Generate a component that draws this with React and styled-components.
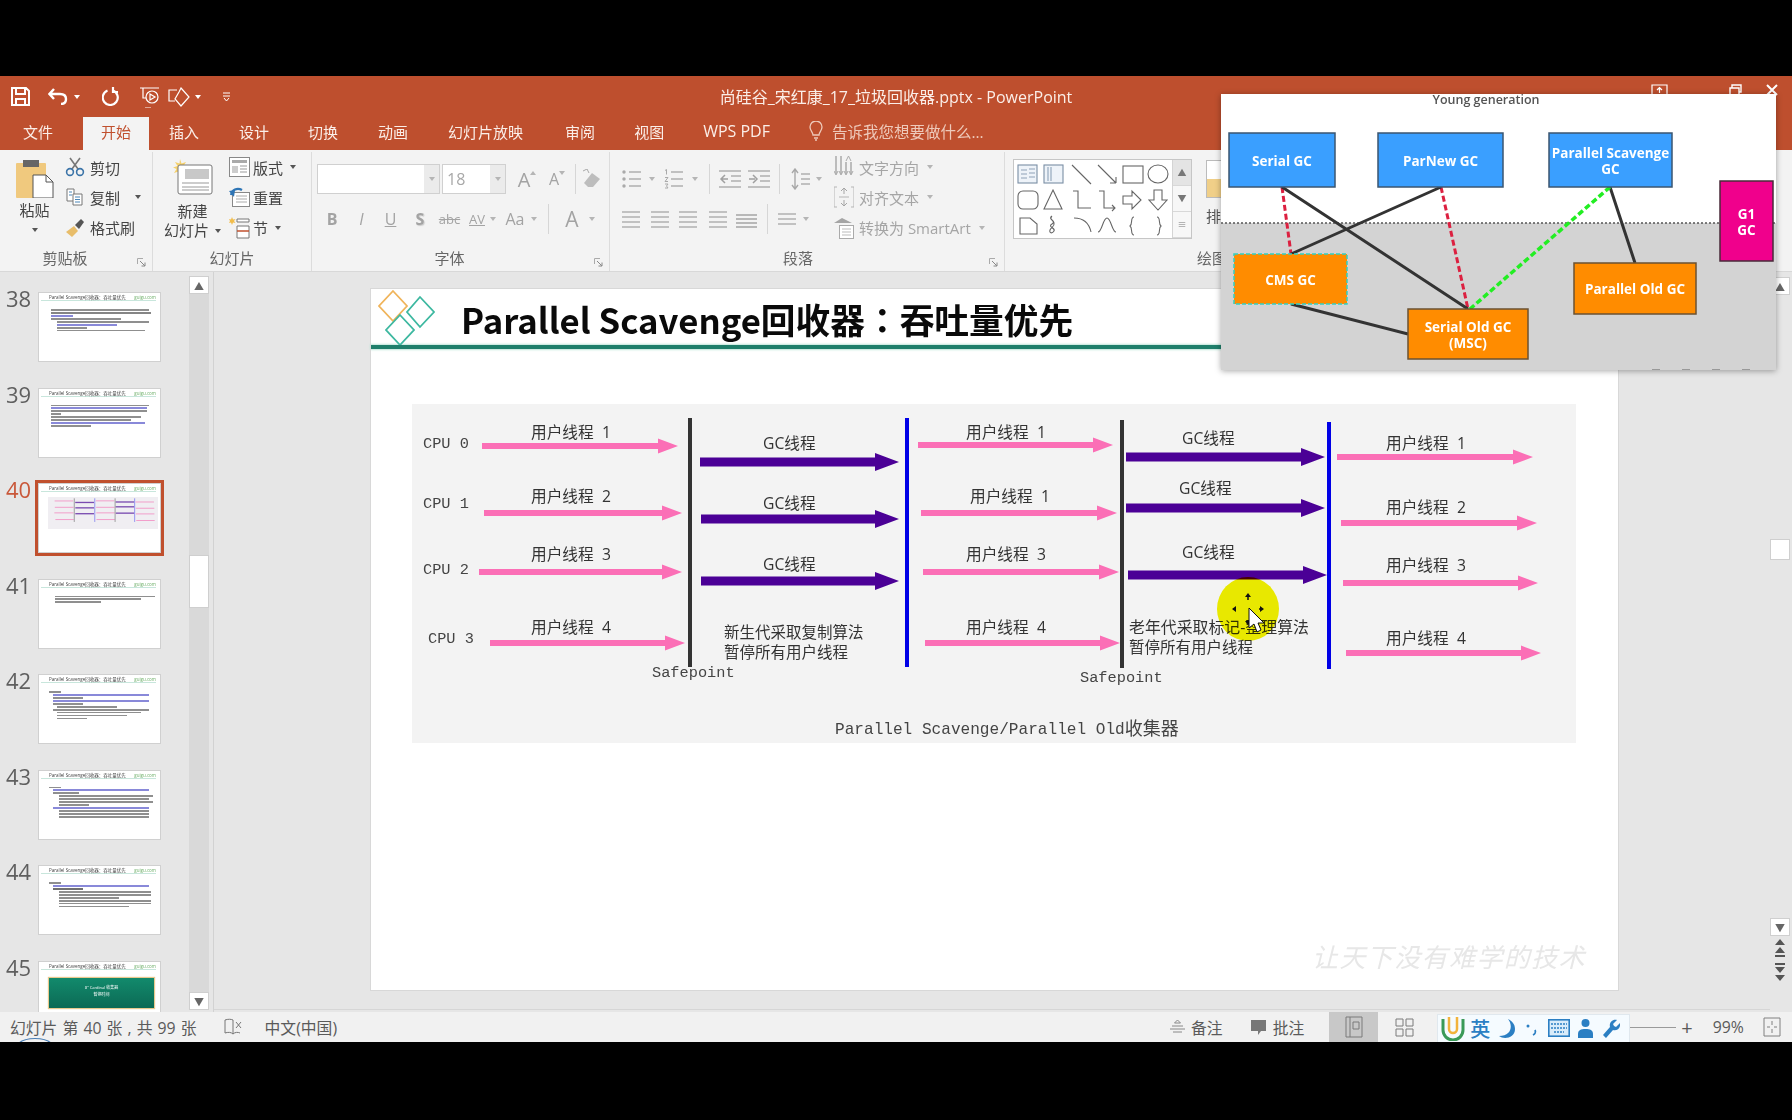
import styled, { createGlobalStyle } from "styled-components";

const CJK = `"Open Sans", "Noto Sans CJK SC", sans-serif`;
const MONO = `"Liberation Mono", "Noto Sans CJK SC", monospace`;

const GlobalStyle = createGlobalStyle`
  html, body { margin: 0; padding: 0; background: #000; }
  body { font-family: ${CJK}; overflow: hidden; }
`;

const Page = styled.div`
  width: 1792px;
  height: 1120px;
  padding-top: 76px;
  box-sizing: border-box;
  background: #000;
  overflow: hidden;
`;

const Window = styled.div`
  position: relative;
  width: 1792px;
  height: 966px;
  display: flex;
  flex-direction: column;
  background: #e6e6e6;
  overflow: hidden;
  filter: blur(0.45px);
`;

/* title bar */
const TitleBar = styled.div`
  height: 41px;
  flex: none;
  display: grid;
  grid-template-columns: 1fr auto 1fr;
  align-items: center;
  background: #be4f2e;
  color: #fff;
`;

const QuickBar = styled.div`
  display: flex;
  align-items: center;
  padding-left: 11px;
`;

const QuickIcon = styled.svg`
  flex: none;
  margin-right: ${(p) => p.$mr || 0}px;
  fill: none;
  stroke: #fff;
  stroke-width: 2;
`;

const QuickCaret = styled.i`
  width: 0;
  height: 0;
  flex: none;
  border-left: 3.5px solid transparent;
  border-right: 3.5px solid transparent;
  border-top: 4px solid #fff;
  margin-right: ${(p) => p.$mr || 0}px;
`;

const DocTitle = styled.div`
  font-size: 16px;
  color: #fbeee8;
  margin-top: -1px;
`;

const WinControls = styled.div`
  display: flex;
  align-items: center;
  justify-content: flex-end;
  align-self: start;
  margin-top: 8px;
  padding-right: 14px;
  gap: 24px;
`;

/* tabs */
const TabBar = styled.div`
  height: 33px;
  flex: none;
  display: flex;
  align-items: stretch;
  padding-left: 23px;
  background: #be4f2e;
`;

const Tab = styled.div`
  display: flex;
  align-items: center;
  font-size: ${(p) => p.$fs || 15}px;
  padding: 0 ${(p) => (p.$active ? 18 : 0)}px 5px;
  margin-right: ${(p) => p.$mr || 0}px;
  color: ${(p) => (p.$active ? "#c0502e" : "#fbeee8")};
  background: ${(p) => (p.$active ? "#f3f3f3" : "transparent")};
`;

const TellMe = styled.div`
  display: flex;
  align-items: center;
  gap: 9px;
  font-size: 15.5px;
  padding-bottom: 5px;
  color: #eec9ba;
`;

/* ribbon */
const Ribbon = styled.div`
  height: 122px;
  flex: none;
  display: flex;
  background: #f3f3f3;
  border-bottom: 1px solid #d8d8d8;
  box-sizing: border-box;
`;

const Group = styled.div`
  position: relative;
  flex: none;
  width: ${(p) => p.$w}px;
  box-sizing: border-box;
  display: flex;
  flex-direction: column;
  margin: 2px 0 0;
  border-right: 1px solid #dcdcdc;
`;

const GroupBody = styled.div`
  height: 94px;
  flex: none;
  display: flex;
  padding: 0 0 0 ${(p) => p.$pl || 0}px;
  box-sizing: border-box;
`;

const GroupLabel = styled.div`
  font-size: 15px;
  text-align: center;
  line-height: 24px;
  color: #666;
`;

const Launcher = styled.svg`
  position: absolute;
  right: 6px;
  bottom: 4px;
`;

const BigButton = styled.div`
  width: ${(p) => p.$w}px;
  margin-right: ${(p) => p.$mr || 0}px;
  flex: none;
  display: flex;
  flex-direction: column;
  align-items: center;
  font-size: 15px;
  line-height: 19px;
  color: #444;
  padding-top: 7px;
`;

const BigLabel = styled.div`
  display: flex;
  align-items: center;
  gap: 6px;
  white-space: nowrap;
`;

const SmallCol = styled.div`
  display: flex;
  flex-direction: column;
  flex: none;
`;

const SmallRow = styled.div`
  height: 30.3px;
  display: flex;
  align-items: center;
  gap: ${(p) => p.$gap || 5}px;
  font-size: 15px;
  white-space: nowrap;
  color: ${(p) => (p.$muted ? "#a5a5a5" : "#444")};
`;

const Caret = styled.i`
  width: 0;
  height: 0;
  flex: none;
  margin-left: ${(p) => p.$ml || 0}px;
  margin-right: ${(p) => p.$mr || 0}px;
  border-left: 3.5px solid transparent;
  border-right: 3.5px solid transparent;
  border-top: 4px solid ${(p) => (p.$muted ? "#b5b5b5" : "#555")};
`;

const ToolRow = styled.div`
  display: flex;
  align-items: center;
  height: ${(p) => p.$h || 30}px;
  margin-top: ${(p) => p.$mt || 0}px;
`;

const Combo = styled.div`
  width: ${(p) => p.$w}px;
  height: 30px;
  margin-right: 2px;
  box-sizing: border-box;
  flex: none;
  display: flex;
  align-items: center;
  justify-content: space-between;
  background: #fff;
  border: 1px solid #d0d0d0;
  font-size: 16px;
  color: #a8a8a8;
  padding-left: 4px;
`;

const ComboArrow = styled.div`
  width: 15px;
  align-self: stretch;
  background: #ebebeb;
  display: flex;
  align-items: center;
  justify-content: center;
`;

const Tool = styled.div`
  width: ${(p) => p.$w}px;
  flex: none;
  display: flex;
  align-items: center;
  justify-content: center;
  color: #a3a3a3;
  font-size: ${(p) => p.$fs || 16}px;
  font-weight: ${(p) => (p.$bold ? 700 : 400)};
  font-style: ${(p) => (p.$italic ? "italic" : "normal")};
  text-decoration-line: ${(p) => (p.$strike ? "line-through" : p.$under ? "underline" : "none")};
`;

const ToolSep = styled.div`
  width: 1px;
  height: 30px;
  flex: none;
  margin: 0 ${(p) => p.$m || 9}px;
  background: #d6d6d6;
`;

const ToolGap = styled.span`
  width: ${(p) => p.$w}px;
  flex: none;
`;

const ParaTools = styled.div`
  width: 212px;
  flex: none;
`;

const Gallery = styled.div`
  width: 179px;
  height: 80px;
  margin-top: 7px;
  flex: none;
  display: flex;
  border: 1px solid #c6c6c6;
  box-sizing: border-box;
  background: #fff;
`;

const GalleryScroll = styled.div`
  width: 19px;
  margin-left: auto;
  display: flex;
  flex-direction: column;
  border-left: 1px solid #d4d4d4;
  background: #f3f3f3;
`;

const GalleryStep = styled.div`
  flex: 1;
  display: flex;
  align-items: center;
  justify-content: center;
  color: #777;
  font-size: 9px;
  border-bottom: 1px solid #d8d8d8;
  background: ${(p) => (p.$off ? "#e4e4e4" : "#f7f7f7")};
`;

const ArrangeCol = styled.div`
  margin-left: 14px;
  padding-top: 8px;
  font-size: 15px;
  color: #555;
`;

const ArrangeBox = styled.div`
  width: 30px;
  height: 38px;
  box-sizing: border-box;
  border: 1px solid #bbb;
  background: linear-gradient(#fff 50%, #f0cf88 50%);
  margin-bottom: 7px;
`;

/* main */
const Main = styled.div`
  flex: 1;
  min-height: 0;
  display: flex;
  background: #e6e6e6;
`;

const Rail = styled.div`
  width: 214px;
  flex: none;
  display: flex;
  box-sizing: border-box;
  border-right: 1px solid #d2d2d2;
`;

const ThumbList = styled.div`
  width: 189px;
  flex: none;
  padding-top: 20px;
  box-sizing: border-box;
  overflow: hidden;
`;

const ThumbRow = styled.div`
  height: 95.5px;
  display: flex;
  align-items: flex-start;
`;

const ThumbNumber = styled.div`
  width: 38px;
  flex: none;
  padding-left: 6px;
  box-sizing: border-box;
  font-size: 22px;
  line-height: 20px;
  margin-top: -4px;
  color: ${(p) => (p.$active ? "#c9583a" : "#5f5f5f")};
`;

const Thumb = styled.div`
  width: 123px;
  height: 70px;
  flex: none;
  box-sizing: border-box;
  background: #fff;
  border: 1px solid #d0d0d0;
  outline: ${(p) => (p.$active ? "3px solid #c0502e" : "none")};
  overflow: hidden;
  padding: 2px 4px 0 10px;
  filter: blur(0.4px);
`;

const ThumbHead = styled.div`
  display: flex;
  justify-content: space-between;
  font-size: 4.5px;
  line-height: 5px;
  color: #444;
  border-bottom: 1px solid #c8e6dc;
  margin: 0 0 ${(p) => p.$mb || 4}px -8px;
  padding-left: 8px;
  white-space: nowrap;
`;

const ThumbBrand = styled.span`
  color: #6fb06a;
`;

const ThumbLine = styled.div`
  height: 1.6px;
  margin: 1.4px 0 1.4px ${(p) => p.$i || 0}px;
  width: ${(p) => p.$w}px;
  background: ${(p) => p.$c || "#444"};
  opacity: 0.6;
`;

const ThumbCard = styled.div`
  margin: 8px 0 0 0;
  width: 105px;
  height: 30px;
  background: linear-gradient(#128a6c, #0c6a55);
  box-shadow: 0 0 1px 1px #e8c98e;
  color: #fff;
  font-size: 4px;
  text-align: center;
  line-height: 7px;
  padding-top: 6px;
  box-sizing: border-box;
`;

const RailScroll = styled.div`
  width: 20px;
  flex: none;
  margin-top: 4px;
  margin-bottom: 2px;
  display: flex;
  flex-direction: column;
  background: #d9d9d9;
`;

const ScrollBtn = styled.div`
  height: ${(p) => p.$h || 18}px;
  flex: none;
  margin-top: ${(p) => (p.$push ? "auto" : `${p.$mt || 0}px`)};
  display: flex;
  align-items: center;
  justify-content: center;
  background: ${(p) => (p.$plain ? "transparent" : "#fff")};
  box-sizing: border-box;
  border: ${(p) => (p.$plain ? "none" : "1px solid #cfcfcf")};
  color: #666;
  font-size: 10px;
`;

const Canvas = styled.div`
  flex: 1;
  min-width: 0;
  padding: 17px 0 0 157px;
  box-sizing: border-box;
  border-bottom: 1px solid #d6d6d6;
  margin-bottom: 2px;
`;

const Slide = styled.div`
  width: 1247px;
  height: 701px;
  background: #fff;
  outline: 1px solid #d8d8d8;
`;

const SlideHeader = styled.div`
  height: 56px;
  display: flex;
  align-items: center;
  gap: 26px;
  padding: 0 0 0 4px;
`;

const SlideTitle = styled.h1`
  margin: 4px 0 0;
  font-family: "Noto Sans CJK SC", sans-serif;
  font-size: 34.7px;
  font-weight: 700;
  line-height: 50px;
  color: #0a0a0a;
  white-space: nowrap;
`;

const CenteredColon = styled.span`
  font-family: "Noto Sans CJK TC", sans-serif;
`;

const GreenRule = styled.div`
  height: 4px;
  background: #1f7f6b;
  box-shadow: 0 0 2px 1px #bfe6da;
`;

const Figure = styled.svg`
  display: block;
  width: 1164px;
  height: 339px;
  margin: 55px 0 0 41px;
  background: #f3f3f3;
`;

const Mono = styled.text`
  font-family: ${MONO};
  font-size: ${(p) => p.$fs || 15.3}px;
  fill: #444;
  dominant-baseline: middle;
`;

const Han = styled.text`
  font-family: ${CJK};
  font-size: ${(p) => p.$fs || 15.7}px;
  fill: #333;
  dominant-baseline: middle;
  white-space: pre;
`;

const Spot = styled.ellipse`
  fill: #f4f400;
  mix-blend-mode: multiply;
`;

const Watermark = styled.div`
  margin: 194px 32px 0 0;
  text-align: right;
  font-family: "Noto Sans CJK SC", sans-serif;
  font-size: 26px;
  font-style: italic;
  letter-spacing: 1.4px;
  color: #e7e7e7;
`;

const VScroll = styled.div`
  width: 20px;
  flex: none;
  margin: 5px 2px 0 0;
  display: flex;
  flex-direction: column;
`;

/* floating diagram */
const Overlay = styled.svg`
  position: absolute;
  left: 1221px;
  top: 18px;
  width: 555px;
  height: 276px;
  overflow: visible;
  box-shadow: 0 1px 6px rgba(0, 0, 0, 0.35);
`;

const NodeText = styled.text`
  font-family: ${CJK};
  font-size: ${(p) => p.$fs || 13.5}px;
  font-weight: 700;
  fill: #fff;
  text-anchor: middle;
  dominant-baseline: middle;
`;

const OverlayCaption = styled.text`
  font-family: ${CJK};
  font-size: 12.5px;
  font-weight: 600;
  fill: #555;
  text-anchor: middle;
  dominant-baseline: middle;
`;

/* status bar */
const StatusBar = styled.div`
  height: 30px;
  flex: none;
  position: relative;
  display: flex;
  align-items: center;
  background: #f1f1f1;
  padding-left: 10px;
  font-size: 15.8px;
  color: #5a5a5a;
`;

const StatusText = styled.span`
  white-space: nowrap;
  margin-left: ${(p) => p.$ml || 0}px;
  margin-right: ${(p) => p.$mr || 0}px;
  word-spacing: 1px;
`;

const StatusItem = styled.div`
  display: flex;
  align-items: center;
  gap: 6px;
  flex: none;
  margin-left: ${(p) => p.$ml || 0}px;
  margin-right: ${(p) => p.$mr || 0}px;
  white-space: nowrap;
  font-size: ${(p) => p.$fs || 15.8}px;
`;

const ViewBtn = styled.div`
  width: ${(p) => p.$w}px;
  height: 30px;
  flex: none;
  display: flex;
  align-items: center;
  justify-content: center;
  background: ${(p) => (p.$on ? "#c8c8c8" : "transparent")};
`;

const ImeBar = styled.div`
  width: 193px;
  height: 29px;
  flex: none;
  box-sizing: border-box;
  margin: 2px 0 0 7px;
  display: flex;
  align-items: center;
  gap: 8px;
  padding-left: 3px;
  background: #f5fbff;
  border: 1px solid #e0e8ee;
  color: #2b7fc3;
  font-size: 20px;
  font-weight: 500;
`;

const ZoomTrack = styled.div`
  width: 46px;
  height: 1px;
  flex: none;
  background: #9a9a9a;
`;

const MagnifierArc = styled.svg`
  position: absolute;
  left: 18px;
  bottom: -1px;
`;

const Ico = ({ w = 20, h = 20, vb, mr, children }) => (
  <svg width={w} height={h} viewBox={vb || `0 0 ${w} ${h}`} fill="none" style={{ flex: "none", marginRight: mr }}>
    {children}
  </svg>
);

const ScissorsIco = () => (
  <Ico>
    <path d="M7 12L15 1M13 12L5 1" stroke="#777" strokeWidth="1.6" />
    <circle cx="5" cy="15" r="3.4" stroke="#3b74a8" strokeWidth="1.6" />
    <circle cx="15" cy="15" r="3.4" stroke="#3b74a8" strokeWidth="1.6" />
  </Ico>
);

const CopyIco = () => (
  <Ico>
    <path d="M2 2h7v12H2z" fill="#fff" stroke="#777" />
    <path d="M8 7h9v11H8z" fill="#fff" stroke="#777" />
    <path d="M4 5h3M4 8h3M10 10h5M10 12.500h5M10 15h5" stroke="#4a86b8" />
  </Ico>
);

const BrushIco = () => (
  <Ico>
    <path d="M1 14L9 8l4 5-6 6z" fill="#e8bd6a" />
    <path d="M10 7l6-6 3 3-5 7z" fill="#555" />
  </Ico>
);

const PasteIco = () => (
  <Ico w={38} h={39}>
    <rect x="0" y="4" width="30" height="35" rx="1" fill="#f0c97e" />
    <path d="M7 1h16v7H7z" fill="#666" />
    <path d="M17 16h13l7 7v16H17z" fill="#fff" stroke="#555" />
    <path d="M30 16v7h7" stroke="#555" />
  </Ico>
);

const NewSlideIco = () => (
  <Ico w={40} h={36}>
    <path
      d="M7 0l1.500 4.500L13 3l-2.500 4L15 8.500l-4.500 1.500L13 14l-4.500-1.500L7 17l-1.500-4.500L1 14l2.500-4L0 8.500 4.500 7 2 3l4.500 1.500z"
      fill="#f5d06a"
    />
    <rect x="5" y="6" width="34" height="29" rx="2" fill="#fff" stroke="#777" />
    <rect x="12" y="10" width="24" height="10" fill="#c8c8c8" />
    <path d="M9 24h27M9 28h27M9 31h27" stroke="#999" />
  </Ico>
);

const LayoutIco = () => (
  <Ico w={21} h={20}>
    <rect x="0.500" y="0.500" width="20" height="19" fill="#fff" stroke="#888" />
    <rect x="3" y="3" width="15" height="3" fill="#aaa" />
    <path d="M3 9h6v7H3z" fill="#ccc" />
    <path d="M11 9h7M11 12h7M11 15h7" stroke="#999" />
  </Ico>
);

const ResetIco = () => (
  <Ico w={21} h={20}>
    <rect x="3.500" y="5.500" width="17" height="14" fill="#fff" stroke="#888" />
    <path d="M7 9h11M7 12h11M7 15h11" stroke="#aaa" />
    <path d="M2 8C3 3 8 0 13 3" stroke="#2e75b5" strokeWidth="2.200" />
    <path d="M0 4l5 6 1-7z" fill="#2e75b5" />
  </Ico>
);

const SectionIco = () => (
  <Ico w={21} h={22}>
    <path d="M3 0l1 2.500L6.500 2 5 4l1.500 2L4 5.500 3 8 2 5.500 0 6l1-2-1-2 2 .5z" fill="#f2bd4a" />
    <path d="M8 2h12v3H8zM8 9h12v12H8z" fill="#fff" stroke="#777" />
    <path d="M8 14h12" stroke="#c0502e" strokeWidth="1.500" />
  </Ico>
);

const Launch = () => (
  <Launcher width="9" height="9" viewBox="0 0 9 9" fill="none">
    <path d="M0.500 6V0.500H6" stroke="#aaa" />
    <path d="M3 3l5 5M8 4.500V8H4.500" stroke="#888" />
  </Launcher>
);

const TextLines = ({ w = 20, ys, x = 0, stroke = "#b0b0b0" }) => (
  <Ico w={w} h={20}>
    {ys.map((y) => (
      <path key={y} d={`M${x} ${y}h${w - x}`} stroke={stroke} strokeWidth="1.500" />
    ))}
  </Ico>
);

const BulletIco = () => (
  <Ico w={19} h={20}>
    <circle cx="2" cy="3" r="1.700" fill="#aaa" />
    <circle cx="2" cy="10" r="1.700" fill="#aaa" />
    <circle cx="2" cy="17" r="1.700" fill="#aaa" />
    <path d="M7 3h12M7 10h12M7 17h12" stroke="#b0b0b0" strokeWidth="1.500" />
  </Ico>
);

const NumberIco = () => (
  <Ico w={19} h={20}>
    <path d="M1 1.500l1.500-1v5M1 8.500h3l-3 4h3M1 15h3l-1.500 2L4 19H1" stroke="#aaa" />
    <path d="M7 3h12M7 10h12M7 17h12" stroke="#b0b0b0" strokeWidth="1.500" />
  </Ico>
);

const IndentIco = ({ flip }) => (
  <Ico w={22} h={20}>
    <path d="M0 2h22M12 7h10M12 12h10M0 18h22" stroke="#b0b0b0" strokeWidth="1.500" />
    <path d={flip ? "M1 10h6M5 6l4 4-4 4" : "M9 10H3M6 6l-4 4 4 4"} stroke="#a0a0a0" strokeWidth="1.500" />
  </Ico>
);

const SpacingIco = () => (
  <Ico w={19} h={22}>
    <path d="M4 2v18M1 5l3-4 3 4M1 17l3 4 3-4" stroke="#a8a8a8" strokeWidth="1.400" />
    <path d="M10 6h9M10 11h9M10 16h9" stroke="#b0b0b0" strokeWidth="1.500" />
  </Ico>
);

const TextDirIco = () => (
  <Ico w={20} h={22}>
    <path d="M2 0v18M7 0v18M12 6v12M17 6v12" stroke="#aaa" strokeWidth="1.500" />
    <path d="M0 15l2 4 2-4M5 15l2 4 2-4M10 15l2 4 2-4M15 15l2 4 2-4" stroke="#aaa" />
    <path d="M12 5l2.500-5 2.500 5" stroke="#aaa" />
  </Ico>
);

const AlignTextIco = () => (
  <Ico w={20} h={22}>
    <path d="M3 1H0v20h3M17 1h3v20h-3" stroke="#b5b5b5" />
    <path d="M10 2v6M10 14v6M7 5l3-3 3 3M7 17l3 3 3-3" stroke="#a5a5a5" />
    <path d="M5 11h10" stroke="#b5b5b5" />
  </Ico>
);

const SmartArtIco = () => (
  <Ico w={20} h={22}>
    <path d="M0 6L8 1l10 5z" fill="#a5a5a5" />
    <rect x="5.500" y="8.500" width="14" height="13" fill="#fff" stroke="#aaa" />
    <path d="M8 12h9M8 15h9M8 18h9" stroke="#bbb" />
  </Ico>
);

const DoubleArrow = ({ down }) => (
  <Ico w={12} h={20}>
    <g transform={down ? "rotate(180 6 10)" : undefined} fill="#555">
      <path d="M6 1l5 6H1zM6 9l5 6H1z" />
      <path d="M1 17h10v2H1z" />
    </g>
  </Ico>
);

const shapes = (
  <svg width="158" height="78" viewBox="0 0 158 78" fill="none" stroke="#666" strokeWidth="1.100" style={{ flex: "none" }}>
    <rect x="4" y="5" width="19" height="18" fill="#eef3f9" stroke="#7a8ea5" />
    <path d="M7 10h6M7 14h6M15 9h6M15 13h6M15 17h6M7 18h6" stroke="#8da1b8" />
    <rect x="30" y="5" width="19" height="18" fill="#eef3f9" stroke="#7a8ea5" />
    <path d="M34 7v14M37 7v14" stroke="#8da1b8" />
    <path d="M58 5l19 19M84 5l18 18M102 23v-6M102 23h-6" />
    <rect x="109" y="6" width="20" height="17" />
    <ellipse cx="144" cy="14" rx="10" ry="9" />
    <rect x="4" y="31" width="20" height="18" rx="5" />
    <path d="M39 30l9 19H30zM59 31h5v17h13" />
    <path d="M85 31h5v17h11M98 45l3 3-3 3" />
    <path d="M109 36h9v-5l9 9-9 9v-5h-9zM140 30h8v10h5l-9 10-9-10h5z" />
    <path d="M6 58h10l7 6v10H6zM38 56c-5 3 5 5 0 8s4 4 2 7-5 2-4-1 5-3 4-7-5-3-2-7M60 58c9 0 15 5 17 14M84 72c4 0 5-14 9-14s5 14 9 14" />
    <path d="M120 57c-4 0-1 7-4 9 3 2 0 9 4 9M143 57c4 0 1 7 4 9-3 2 0 9-4 9" />
  </svg>
);

const MiniArrow = ({ x1, x2, y, fill, t, h, hl }) => (
  <polygon
    fill={fill}
    points={`${x1},${y - t / 2} ${x2 - hl},${y - t / 2} ${x2 - hl},${y - h} ${x2},${y} ${x2 - hl},${y + h} ${x2 - hl},${y + t / 2} ${x1},${y + t / 2}`}
  />
);

const pinkArrows = [
  [482, 678, 446],
  [484, 682, 513],
  [479, 682, 572],
  [490, 685, 643],
  [918, 1113, 445],
  [921, 1117, 513],
  [923, 1119, 572],
  [925, 1120, 643],
  [1337, 1533, 457],
  [1341, 1537, 523],
  [1343, 1538, 583],
  [1346, 1541, 653],
];

const purpleArrows = [
  [700, 899, 462],
  [701, 899, 519],
  [701, 899, 581],
  [1126, 1325, 457],
  [1126, 1325, 508],
  [1128, 1327, 575],
];

const userLabels = [
  [531, 434, 1],
  [531, 498, 2],
  [531, 556, 3],
  [531, 629, 4],
  [966, 434, 1],
  [970, 498, 1],
  [966, 556, 3],
  [966, 629, 4],
  [1386, 445, 1],
  [1386, 509, 2],
  [1386, 567, 3],
  [1386, 640, 4],
];

const gcLabels = [
  [763, 445],
  [763, 505],
  [763, 566],
  [1182, 440],
  [1179, 490],
  [1182, 554],
];

const cpuLabels = [
  [423, 444, 0],
  [423, 504, 1],
  [423, 570, 2],
  [428, 639, 3],
];

const nodes = [
  { x: 1229, y: 133, w: 106, h: 54, c: "#3a9fff", s: "#3b5670", t: ["Serial GC"] },
  { x: 1378, y: 133, w: 125, h: 54, c: "#3a9fff", s: "#3b5670", t: ["ParNew GC"] },
  { x: 1549, y: 133, w: 123, h: 54, c: "#3a9fff", s: "#3b5670", t: ["Parallel Scavenge", "GC"] },
  { x: 1720, y: 181, w: 53, h: 80, c: "#f0008c", s: "#4a2a3a", t: ["G1", "GC"] },
  { x: 1574, y: 263, w: 122, h: 51, c: "#ff8c00", s: "#6b5232", t: ["Parallel Old GC"] },
  { x: 1408, y: 309, w: 120, h: 50, c: "#ff8c00", s: "#6b5232", t: ["Serial Old GC", "(MSC)"] },
];

const thumbBodies = {
  38: [[2, 98], [2, 100, "#333"], [2, 22, "#3a3ac0"], [2, 70], [8, 92], [8, 60, "#3a3ac0"], [8, 30], [8, 88]],
  39: [[2, 98], [2, 96, "#3a3ac0"], [2, 96], [2, 10], [2, 90], [2, 80], [2, 94, "#3a3ac0"], [2, 40]],
  41: [[6, 100], [6, 86], [6, 46]],
  42: [[0, 12], [4, 96, "#3a3ac0"], [4, 30], [4, 96, "#3a3ac0"], [4, 30], [8, 60], [4, 96], [8, 84], [8, 70], [8, 30]],
  43: [[0, 12], [4, 96, "#3a3ac0"], [4, 26], [10, 94], [10, 90], [10, 94], [10, 30], [4, 96, "#3a3ac0"], [10, 90], [10, 90], [10, 90]],
  44: [[0, 12], [4, 96, "#3a3ac0"], [4, 30, "#111"], [10, 92], [10, 92], [10, 60], [10, 92], [10, 92], [10, 70]],
};

const MiniDiagram = () => (
  <svg width="110" height="34" viewBox="412 404 1164 339" style={{ display: "block", marginLeft: -1 }}>
    <rect x="412" y="404" width="1164" height="339" fill="#f0eef2" />
    {pinkArrows.map(([a, b, y]) => (
      <rect key={`${a}${y}`} x={a} y={y - 5} width={b - a} height="10" fill="#f29ac8" />
    ))}
    {purpleArrows.map(([a, b, y]) => (
      <rect key={`${a}${y}`} x={a} y={y - 7} width={b - a} height="14" fill="#7a4bb0" />
    ))}
    <path d="M690 418v250M1122 418v250" stroke="#999" strokeWidth="10" />
    <path d="M907 418v250M1329 418v250" stroke="#8f8ff0" strokeWidth="10" />
  </svg>
);

const slideNumbers = [38, 39, 40, 41, 42, 43, 44, 45];

const App = () => {
  return (
    <Page>
      <GlobalStyle />
      <Window>
        <TitleBar>
          <QuickBar>
            <QuickIcon width="19" height="19" viewBox="0 0 19 19" $mr={18}>
              <path d="M1 1h14l3 3v14H1zM5 1v6h9V1M5 18v-6h9v6" />
            </QuickIcon>
            <QuickIcon width="21" height="17" viewBox="0 0 21 17" $mr={5}>
              <path d="M6 1L1.500 6 6 11M2 6h10c4 0 6 2 6 5s-2 5-5 5" strokeWidth="2.400" />
            </QuickIcon>
            <QuickCaret $mr={22} />
            <QuickIcon width="18" height="19" viewBox="0 0 18 19" $mr={20}>
              <path d="M11 3.500a7.500 7.500 0 1 1-5.500 0M11 0v5h5" strokeWidth="2.200" />
            </QuickIcon>
            <QuickIcon width="22" height="22" viewBox="0 0 22 22" $mr={6} style={{ strokeWidth: 1.2 }}>
              <path d="M0 2h19M3 2v10h3M11 22h-6" />
              <circle cx="12" cy="11" r="6" />
              <path d="M10 8l5 3-5 3z" />
            </QuickIcon>
            <QuickIcon width="22" height="22" viewBox="0 0 22 22" $mr={5} style={{ strokeWidth: 1.2 }}>
              <path d="M9 4H1v11h6M13 2l8 9-8 9-6-7 4-7z" />
            </QuickIcon>
            <QuickCaret $mr={22} />
            <QuickIcon width="7" height="9" viewBox="0 0 7 9" style={{ strokeWidth: 1 }}>
              <path d="M0 1h7M0 4h7M1 6l2.500 3L6 6" />
            </QuickIcon>
          </QuickBar>
          <DocTitle>尚硅谷_宋红康_17_垃圾回收器.pptx - PowerPoint</DocTitle>
          <WinControls>
            <QuickIcon width="17" height="12" viewBox="0 0 17 12" style={{ strokeWidth: 1.2 }}>
              <path d="M1 1h15v10H1zM8.500 9V4M6 6l2.500-2.500L11 6" />
            </QuickIcon>
            <QuickIcon width="13" height="12" viewBox="0 0 13 12">
              <path d="M0 11h13" />
            </QuickIcon>
            <QuickIcon width="13" height="12" viewBox="0 0 13 12" style={{ strokeWidth: 1.4 }}>
              <path d="M1 4h9v7H1zM3 4V1h9v7h-2" />
            </QuickIcon>
            <QuickIcon width="12" height="12" viewBox="0 0 12 12" style={{ strokeWidth: 2 }}>
              <path d="M1 1l10 10M11 1L1 11" />
            </QuickIcon>
          </WinControls>
        </TitleBar>

        <TabBar>
          <Tab $mr={30}>文件</Tab>
          <Tab $active $mr={20}>开始</Tab>
          <Tab $mr={40}>插入</Tab>
          <Tab $mr={39}>设计</Tab>
          <Tab $mr={40}>切换</Tab>
          <Tab $mr={40}>动画</Tab>
          <Tab $mr={42}>幻灯片放映</Tab>
          <Tab $mr={39}>审阅</Tab>
          <Tab $mr={39}>视图</Tab>
          <Tab $mr={39} $fs={16}>WPS PDF</Tab>
          <TellMe>
            <svg width="14" height="20" viewBox="0 0 14 20" fill="none" stroke="#eec9ba" strokeWidth="1.300">
              <path d="M4 14c0-3-3-4-3-8a6 6 0 0 1 12 0c0 4-3 5-3 8zM5 17h4M6 19h2" />
            </svg>
            告诉我您想要做什么...
          </TellMe>
        </TabBar>

        <Ribbon>
          <Group $w={153}>
            <GroupBody $pl={16}>
              <BigButton $w={37} $mr={12}>
                <PasteIco />
                <BigLabel style={{ marginTop: 3 }}>粘贴</BigLabel>
                <Caret style={{ marginTop: 8 }} />
              </BigButton>
              <SmallCol>
                <SmallRow>
                  <ScissorsIco />
                  剪切
                </SmallRow>
                <SmallRow>
                  <CopyIco />
                  复制
                  <Caret $ml={10} />
                </SmallRow>
                <SmallRow>
                  <BrushIco />
                  格式刷
                </SmallRow>
              </SmallCol>
            </GroupBody>
            <GroupLabel style={{ paddingRight: 22 }}>剪贴板</GroupLabel>
            <Launch />
          </Group>

          <Group $w={159}>
            <GroupBody $pl={9}>
              <BigButton $w={61} $mr={6}>
                <NewSlideIco />
                <BigLabel style={{ marginTop: 7 }}>新建</BigLabel>
                <BigLabel>
                  幻灯片
                  <Caret />
                </BigLabel>
              </BigButton>
              <SmallCol>
                <SmallRow $gap={3}>
                  <LayoutIco />
                  版式
                  <Caret $ml={4} />
                </SmallRow>
                <SmallRow $gap={3}>
                  <ResetIco />
                  重置
                </SmallRow>
                <SmallRow $gap={3}>
                  <SectionIco />
                  节
                  <Caret $ml={4} />
                </SmallRow>
              </SmallCol>
            </GroupBody>
            <GroupLabel>幻灯片</GroupLabel>
          </Group>

          <Group $w={298}>
            <GroupBody $pl={5} style={{ flexDirection: "column" }}>
              <ToolRow $mt={12}>
                <Combo $w={123}>
                  <span />
                  <ComboArrow>
                    <Caret $muted />
                  </ComboArrow>
                </Combo>
                <Combo $w={64}>
                  18
                  <ComboArrow>
                    <Caret $muted />
                  </ComboArrow>
                </Combo>
                <Tool $w={24} $fs={20} style={{ marginLeft: 7 }}>
                  A
                  <Caret $muted style={{ transform: "rotate(180deg)", marginTop: -12 }} />
                </Tool>
                <Tool $w={24} $fs={16} style={{ marginLeft: 6 }}>
                  A
                  <Caret $muted style={{ marginTop: -12 }} />
                </Tool>
                <ToolSep $m={6} />
                <Ico w={20} h={20}>
                  <path d="M2 14L10 4l8 6-7 8H6z" fill="#bdbdbd" />
                  <path d="M1 2l4-2 2 4" stroke="#a8a8a8" />
                </Ico>
              </ToolRow>
              <ToolRow $mt={10} $h={30}>
                <Tool $w={30} $bold>B</Tool>
                <Tool $w={29} $italic>I</Tool>
                <Tool $w={29} $under>U</Tool>
                <Tool $w={30} $bold style={{ textShadow: "1px 1px 1px #ccc" }}>S</Tool>
                <Tool $w={29} $fs={13} $strike>abc</Tool>
                <Tool $w={26} $fs={13} $under>AV</Tool>
                <Caret $muted />
                <Tool $w={32} $fs={16} style={{ marginLeft: 3 }}>Aa</Tool>
                <Caret $muted />
                <ToolSep $m={11} />
                <Tool $w={24} $fs={21}>A</Tool>
                <Caret $muted $ml={5} />
              </ToolRow>
            </GroupBody>
            <GroupLabel style={{ paddingRight: 22 }}>字体</GroupLabel>
            <Launch />
          </Group>

          <Group $w={395}>
            <GroupBody $pl={12}>
              <ParaTools>
                <ToolRow $mt={12}>
                  <BulletIco />
                  <Caret $muted $ml={8} $mr={9} />
                  <NumberIco />
                  <Caret $muted $ml={9} $mr={7} />
                  <ToolSep $m={4} />
                  <ToolGap $w={5} />
                  <IndentIco />
                  <ToolGap $w={7} />
                  <IndentIco flip />
                  <ToolSep $m={9} />
                  <ToolGap $w={2} />
                  <SpacingIco />
                  <Caret $muted $ml={6} />
                </ToolRow>
                <ToolRow $mt={10}>
                  <TextLines w={18} ys={[3, 8, 13, 18]} />
                  <ToolGap $w={11} />
                  <TextLines w={18} ys={[3, 8, 13, 18]} />
                  <ToolGap $w={10} />
                  <TextLines w={18} ys={[3, 8, 13, 18]} />
                  <ToolGap $w={12} />
                  <TextLines w={18} ys={[3, 8, 13, 18]} />
                  <ToolGap $w={9} />
                  <TextLines w={21} ys={[6, 10, 14, 18]} stroke="#a5a5a5" />
                  <ToolSep $m={10} />
                  <TextLines w={18} ys={[5, 10, 15]} />
                  <Caret $muted $ml={7} />
                </ToolRow>
              </ParaTools>
              <SmallCol>
                <SmallRow $muted>
                  <TextDirIco />
                  文字方向
                  <Caret $muted $ml={3} />
                </SmallRow>
                <SmallRow $muted>
                  <AlignTextIco />
                  对齐文本
                  <Caret $muted $ml={3} />
                </SmallRow>
                <SmallRow $muted>
                  <SmartArtIco />
                  转换为 SmartArt
                  <Caret $muted $ml={3} />
                </SmallRow>
              </SmallCol>
            </GroupBody>
            <GroupLabel style={{ paddingRight: 18 }}>段落</GroupLabel>
            <Launch />
          </Group>

          <Group $w={414} style={{ borderRight: "none" }}>
            <GroupBody $pl={8}>
              <Gallery>
                {shapes}
                <GalleryScroll>
                  <GalleryStep $off>▲</GalleryStep>
                  <GalleryStep>▼</GalleryStep>
                  <GalleryStep>≡</GalleryStep>
                </GalleryScroll>
              </Gallery>
              <ArrangeCol>
                <ArrangeBox />
                排列
              </ArrangeCol>
            </GroupBody>
            <GroupLabel>绘图</GroupLabel>
          </Group>
        </Ribbon>

        <Main>
          <Rail>
            <ThumbList>
              {slideNumbers.map((n) => (
                <ThumbRow key={n}>
                  <ThumbNumber $active={n === 40}>{n}</ThumbNumber>
                  <Thumb $active={n === 40}>
                    <ThumbHead $mb={n === 40 || n === 45 ? 4 : 8}>
                      <span>Parallel Scavenge回收器：吞吐量优先</span>
                      <ThumbBrand>guigu.com</ThumbBrand>
                    </ThumbHead>
                    {n === 40 && <MiniDiagram />}
                    {n === 45 && <ThumbCard>8"  Cardinal 收集器<br />暂停时间</ThumbCard>}
                    {(thumbBodies[n] || []).map(([i, w, c], idx) => (
                      <ThumbLine key={idx} $i={i} $w={w} $c={c} />
                    ))}
                  </Thumb>
                </ThumbRow>
              ))}
            </ThumbList>
            <RailScroll>
              <ScrollBtn>▲</ScrollBtn>
              <ScrollBtn $h={53} $mt={261} />
              <ScrollBtn $push>▼</ScrollBtn>
            </RailScroll>
          </Rail>

          <Canvas>
            <Slide>
              <SlideHeader>
                <svg width="60" height="56" viewBox="0 0 60 56" fill="none" strokeWidth="1.800" style={{ flex: "none" }}>
                  <path d="M18 2l14 15-14 15L4 17z" stroke="#f0b45a" />
                  <path d="M45 8l14 15-14 15-13-15z" stroke="#3db8a0" />
                  <path d="M25 26l14 15-14 15-14-15z" stroke="#3db8a0" />
                </svg>
                <SlideTitle>Parallel Scavenge回收器<CenteredColon>：</CenteredColon>吞吐量优先</SlideTitle>
              </SlideHeader>
              <GreenRule />
              <Figure viewBox="412 404 1164 339">
                {pinkArrows.map(([a, b, y]) => (
                  <MiniArrow key={`p${a}${y}`} x1={a} x2={b} y={y} fill="#fb6fb6" t={6} h={7.5} hl={20} />
                ))}
                {purpleArrows.map(([a, b, y]) => (
                  <MiniArrow key={`g${a}${y}`} x1={a} x2={b} y={y} fill="#4b0096" t={9} h={9} hl={24} />
                ))}
                <path d="M690 418v249M1122 420v248" stroke="#333" strokeWidth="4" />
                <path d="M907 418v249M1329 422v247" stroke="#0000e6" strokeWidth="4" />
                {cpuLabels.map(([x, y, n]) => (
                  <Mono key={n} x={x} y={y}>{`CPU ${n}`}</Mono>
                ))}
                {userLabels.map(([x, y, n]) => (
                  <Han key={`${x}${y}`} x={x} y={y}>{`用户线程  ${n}`}</Han>
                ))}
                {gcLabels.map(([x, y]) => (
                  <Han key={`${x}${y}`} x={x} y={y}>GC线程</Han>
                ))}
                <Han x={724} y={634} $fs={15.5}>新生代采取复制算法</Han>
                <Han x={724} y={654} $fs={15.5}>暂停所有用户线程</Han>
                <Han x={1129} y={629} $fs={15.9}>老年代采取标记-整理算法</Han>
                <Han x={1129} y={649} $fs={15.5}>暂停所有用户线程</Han>
                <Mono x={652} y={673}>Safepoint</Mono>
                <Mono x={1080} y={678}>Safepoint</Mono>
                <Mono x={835} y={730} $fs={16.1}>Parallel Scavenge/Parallel Old<tspan fontSize="18">收集器</tspan></Mono>
                <Spot cx={1248} cy={609} rx={31} ry={32} />
                <path d="M1248 600v-4m0 26v-2M1236 609h-3m26 0h3" stroke="#111" strokeWidth="1.500" />
                <path d="M1248 593l-3 4h6zM1248 625l-3-4h6zM1232 609l4-3v6zM1264 609l-4-3v6z" fill="#111" />
                <path d="M1249 608v20l5-4 3 8 4-2-3-7h6z" fill="#fff" stroke="#111" />
              </Figure>
              <Watermark>让天下没有难学的技术</Watermark>
            </Slide>
          </Canvas>

          <VScroll>
            <ScrollBtn>▲</ScrollBtn>
            <ScrollBtn $h={21} $mt={244} />
            <ScrollBtn $mt={358}>▼</ScrollBtn>
            <ScrollBtn $plain $h={22} $mt={1}><DoubleArrow /></ScrollBtn>
            <ScrollBtn $plain $h={22} $mt={2}><DoubleArrow down /></ScrollBtn>
          </VScroll>
        </Main>

        <StatusBar>
          <StatusText $mr={27}>幻灯片 第 40 张 , 共 99 张</StatusText>
          <Ico w={18} h={18}>
            <path d="M9 2C7 1 4 1 1 2v13c3-1 6-1 8 1 2-2 5-2 7-1" stroke="#777" />
            <path d="M9 2v14M12 4l5 6M17 4l-5 6" stroke="#777" />
          </Ico>
          <StatusText $ml={23} $mr={833}>中文(中国)</StatusText>
          <StatusItem $mr={27}>
            <Ico w={15} h={18}>
              <path d="M7.500 2l-3 3h6zM2 8h11M0 11h15M3 14h9" stroke="#888" />
            </Ico>
            备注
          </StatusItem>
          <StatusItem $mr={25}>
            <Ico w={17} h={18}>
              <path d="M1 2h15v11h-5l-3 4v-4H1z" fill="#777" />
            </Ico>
            批注
          </StatusItem>
          <ViewBtn $w={49} $on>
            <Ico w={18} h={22}>
              <path d="M1 1h16v20H1zM5 1v20M8 6h6v7H8z" stroke="#7a7a7a" />
            </Ico>
          </ViewBtn>
          <ViewBtn $w={52}>
            <Ico w={19} h={19}>
              <path d="M1 1h7v7H1zM11 1h7v7h-7zM1 11h7v7H1zM11 11h7v7h-7z" stroke="#7a7a7a" />
            </Ico>
          </ViewBtn>
          <ImeBar>
            <Ico w={24} h={26} mr={-3}>
              <path d="M2 4v11a10 10 0 0 0 20 0V4" stroke="#3a9a58" strokeWidth="3" />
              <path d="M8 2v12a4 4 0 0 0 8 0V2" stroke="#f2b33d" strokeWidth="2.500" />
            </Ico>
            英
            <Ico w={18} h={20}>
              <path d="M10 1c5 6 4 17-9 17 5 4 16 2 16-7 0-5-3-8-7-10z" fill="#2b7fc3" />
            </Ico>
            <Ico w={16} h={20}>
              <circle cx="4" cy="8" r="1.500" fill="#2b7fc3" />
              <path d="M11 12c1 2 0 4-2 5" stroke="#2b7fc3" strokeWidth="1.800" />
            </Ico>
            <Ico w={22} h={18}>
              <rect x="0.800" y="0.800" width="20.400" height="16.400" fill="#d9ecfa" stroke="#2b7fc3" strokeWidth="1.600" />
              <path d="M3 5h16M3 9h16M6 13h10" stroke="#2b7fc3" strokeWidth="1.500" strokeDasharray="2 1" />
            </Ico>
            <Ico w={15} h={20}>
              <circle cx="7.500" cy="5" r="4" fill="#2b7fc3" />
              <path d="M0 20v-4c0-4 3-5 7.500-5s7.500 1 7.500 5v4z" fill="#2b7fc3" />
            </Ico>
            <Ico w={19} h={20}>
              <path d="M2 17L9 9c-1-4 2-8 7-7l-4 4 1 2 2 1 4-4c1 5-3 8-7 7l-7 8z" fill="#2b7fc3" />
            </Ico>
          </ImeBar>
          <ZoomTrack />
          <StatusItem $ml={5} $mr={20} $fs={20}>+</StatusItem>
          <StatusItem $mr={19}>99%</StatusItem>
          <Ico w={18} h={20}>
            <path d="M1 1h16v18H1zM9 4v4M9 12v4M4 10h3M11 10h3" stroke="#808080" />
          </Ico>
          <MagnifierArc width="34" height="6" viewBox="0 0 34 6" fill="none">
            <path d="M1 6C8 0 26 0 33 6" stroke="#4a7fb5" strokeWidth="1.200" />
          </MagnifierArc>
        </StatusBar>

        <Overlay viewBox="1221 94 555 276">
          <rect x="1221" y="94" width="555" height="129" fill="#fff" />
          <rect x="1221" y="223" width="555" height="147" fill="#d3d3d3" />
          <path d="M1221 223h555" stroke="#555" strokeWidth="1.500" strokeDasharray="2 2" />
          <OverlayCaption x={1486} y={101}>Young generation</OverlayCaption>
          <path d="M1282 187l9 67M1441 187l27 122" stroke="#dc2040" strokeWidth="3" strokeDasharray="6 3" />
          <path d="M1282 187l186 122M1441 187l-150 67M1610 187l25 76M1291 304l117 30" stroke="#333" strokeWidth="3" />
          <path d="M1610 187l-140 122" stroke="#22ee22" strokeWidth="3.500" strokeDasharray="6 3" />
          <path d="M1652 369.500h100" stroke="#999" strokeDasharray="8 22" />
          <rect x="1234" y="254" width="113" height="50" fill="#ff8c00" stroke="#35d0c0" strokeWidth="1.500" strokeDasharray="4 2" />
          <NodeText x={1290.500} y={281}>CMS GC</NodeText>
          {nodes.map((n) => (
            <g key={n.t[0]}>
              <rect x={n.x} y={n.y} width={n.w} height={n.h} fill={n.c} stroke={n.s} strokeWidth="1.500" />
              {n.t.map((line, i) => (
                <NodeText key={line} x={n.x + n.w / 2} y={n.y + n.h / 2 + 2 + (i - (n.t.length - 1) / 2) * 16}>
                  {line}
                </NodeText>
              ))}
            </g>
          ))}
        </Overlay>
      </Window>
    </Page>
  );
};

export default App;
